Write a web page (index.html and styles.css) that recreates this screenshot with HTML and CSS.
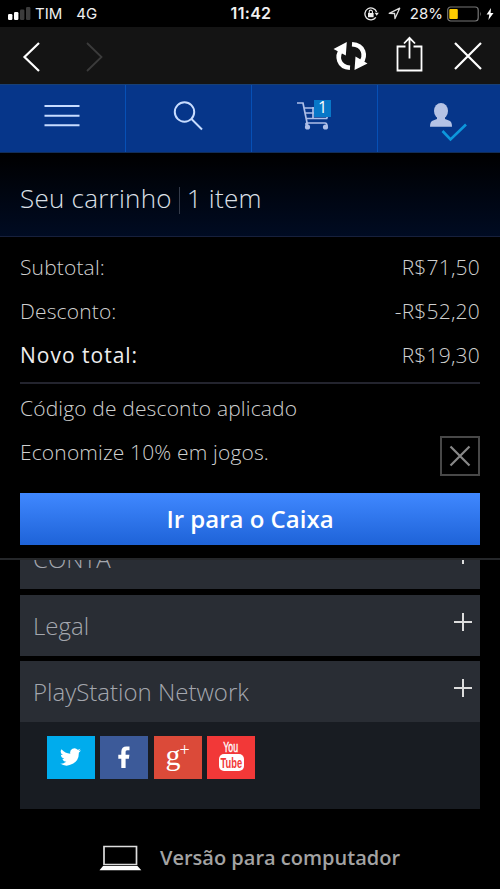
FILE: index.html
```html
<!DOCTYPE html>
<html lang="pt-BR">
<head>
<meta charset="utf-8">
<title>Seu carrinho</title>
<link rel="stylesheet" href="styles.css">
</head>
<body>
<div class="screen">
  <header class="status">
    <div class="status-left">
      <svg class="signal" width="23" height="14" viewBox="0 0 23 14"><rect x="0" y="7" width="4.4" height="6" rx="1.2" fill="#fff"/><rect x="6" y="5" width="4.4" height="8" rx="1.2" fill="#fff"/><rect x="12" y="2.500" width="4.400" height="10.500" rx="1.200" fill="#3c3c3c"/><rect x="18" y="0" width="4.400" height="13" rx="1.200" fill="#3c3c3c"/></svg>
      <span class="carrier">TIM</span><span class="radio">4G</span>
    </div>
    <span class="clock">11:42</span>
    <div class="status-right">
      <svg class="lock" width="15" height="14" viewBox="0 0 15 14"><path d="M11.800 10.400A6 6 0 1 1 12.600 5" fill="none" stroke="#e8e8e8" stroke-width="1.300"/><path d="M10.600 5.800h4.200l-2.100 3z" fill="#e8e8e8"/><rect x="4" y="6" width="5.600" height="4.200" fill="#eee"/><path d="M5.200 6V4.700a1.600 1.600 0 0 1 3.200 0V6" fill="none" stroke="#eee" stroke-width="1.100"/></svg>
      <svg class="location" width="13" height="13" viewBox="0 0 13 13"><path d="M1.200 6.300 11.700 1.200 7 11.600 6.600 6.500z" fill="none" stroke="#ddd" stroke-width="1.300" stroke-linejoin="round"/></svg>
      <span class="percent">28%</span>
      <svg class="battery" width="36" height="16" viewBox="0 0 36 16"><rect x=".7" y="1" width="30.500" height="14" rx="3" fill="none" stroke="#777" stroke-width="1.200"/><rect x="2.300" y="3" width="8.500" height="10" rx="1" fill="#ffcd00"/><path d="M33 5.500q1.600 2.500 0 5z" fill="#777"/></svg>
      <svg class="bolt" width="8" height="14" viewBox="0 0 8 14"><path d="M5 1 .6 7.600h2.700L2.400 13 7.500 5.900H4.600z" fill="#fff"/></svg>
    </div>
  </header>
  <div class="toolbar">
    <svg width="500" height="57" viewBox="0 27 500 57" fill="none" stroke="#fff" stroke-width="2.200">
      <path d="M39 43 24.500 57 39 71"/>
      <path d="M87 43 101.500 57 87 71" stroke="#3b3b3b" stroke-width="1.800"/>
      <g stroke-width="4.600"><path d="M350 67.800C338 67 336.500 56 341.500 49.500"/><path d="M352 44.200C364.500 45 366 56 361 62.500"/></g>
      <path d="M333.500 49 346.800 42 345.800 55.500zM367.500 63.500 354.500 70 355.500 56.500z" fill="#fff" stroke="none"/>
      <path d="M405.500 46.500H397.500V70.500H421.500V46.500H413.500M409.500 58.500V38M404 43.500 409.500 37.800 415 43.500" stroke-width="1.800"/>
      <path d="M455 43 481 69M481 43 455 69"/>
    </svg>
  </div>
  <nav class="nav">
    <a class="tab"><svg width="36" height="24" viewBox="0 0 36 24"><path d="M.5 2h35M.5 11.700h35M.5 21.300h35" stroke="#c7dcff" stroke-width="2"/></svg></a>
    <a class="tab"><svg width="30" height="30" viewBox="0 0 30 30" fill="none" stroke="#c7dcff" stroke-width="2"><circle cx="11.500" cy="11" r="9.700"/><path d="M18.500 18 29 28.500"/></svg></a>
    <a class="tab cart"><svg width="34" height="30" viewBox="0 0 34 30" fill="none" stroke="#aebfe8" stroke-width="1.700"><path d="M0 2h6l4.500 22M7.200 7H17M8.200 12H18M9.200 17.500h20.500l1-3M16 6v11M9.500 24.500q-1.500-2.500 1-2.500H28q2 0 2 3"/><circle cx="10.500" cy="26" r="2.600" fill="#aebfe8" stroke="none"/><circle cx="28.500" cy="26" r="2.600" fill="#aebfe8" stroke="none"/></svg><span class="count">1</span></a>
    <a class="tab user"><svg width="38" height="39" viewBox="0 0 38 39"><ellipse cx="12" cy="8" rx="7" ry="8" fill="#b5c3e5"/><path d="M8 12h8v4l4.500 1.700q2.500 1 2.500 6H1q0-5 2.500-6L8 16z" fill="#b5c3e5"/><path d="m13.500 28 8 8.500L37 21.500" fill="none" stroke="#0d97dc" stroke-width="2.600"/></svg></a>
  </nav>
  <section class="cart-head"><span class="cart-title">Seu carrinho</span><i class="bar"></i><span class="cart-items">1 item</span></section>
  <section class="summary">
    <div class="row"><span class="t-sub">Subtotal:</span><span class="price">R$71,50</span></div>
    <div class="row"><span class="t-desc">Desconto:</span><span class="price">-R$52,20</span></div>
    <div class="row"><span class="t-total">Novo total:</span><span class="price">R$19,30</span></div>
    <hr class="divider">
    <div class="row"><span class="t-code">Código de desconto aplicado</span></div>
    <div class="row"><span class="t-save">Economize 10% em jogos.</span><span class="remove"><svg width="22" height="22" viewBox="0 0 22 22"><path d="m1.500 1.500 19 19M20.500 1.500l-19 19" stroke="#888" stroke-width="2.200"/></svg></span></div>
    <a class="checkout"><span>Ir para o Caixa</span></a>
  </section>
  <section class="links">
    <div class="clip"><div class="item"><span class="t-conta">CONTA</span><i class="plus"></i></div></div>
    <div class="item"><span class="t-legal">Legal</span><i class="plus"></i></div>
    <div class="item"><span class="t-psn">PlayStation Network</span><i class="plus"></i></div>
    <div class="social">
      <a class="tile twitter"><svg width="21" height="18" viewBox="0 0 24 20"><path fill="#fff" d="M24 2.400a10 10 0 0 1-2.800.8A4.900 4.900 0 0 0 23.300.500a10 10 0 0 1-3.100 1.200 4.900 4.900 0 0 0-8.400 4.500A14 14 0 0 1 1.700 1.100a4.900 4.900 0 0 0 1.500 6.600A5 5 0 0 1 1 7.100a4.900 4.900 0 0 0 3.900 4.900 5 5 0 0 1-2.200.1 4.900 4.900 0 0 0 4.600 3.400A10 10 0 0 1 0 17.500 14 14 0 0 0 21.500 5.100 10 10 0 0 0 24 2.400z"/></svg></a>
      <a class="tile facebook"><svg width="12" height="22" viewBox="0 0 12 22"><path fill="#fff" d="M3.300 22V12.700H.3V8.700h3V5.800C3.300 2.300 5.300.6 8.300.6h3.200v3.700H9.300c-1.400 0-1.700.8-1.700 1.900v2.500h3.800l-.5 4H7.600V22z"/></svg></a>
      <a class="tile google"><span class="g">g</span><span class="gplus">+</span></a>
      <a class="tile youtube"><span class="you">You</span><span class="tube"><b>Tube</b></span></a>
    </div>
  </section>
  <footer class="desktop">
    <svg width="43" height="26" viewBox="0 0 43 26"><path d="M5 1.500h32.500v18H5z" fill="none" stroke="#ddd" stroke-width="1.700"/><path d="M4 21h34.500l3.800 4.200H.500z" fill="#fff"/></svg>
    <span class="t-desktop">Versão para computador</span>
  </footer>
</div>
</body>
</html>
```
FILE: styles.css
```css
* { box-sizing: border-box; }
body { margin: 0; background: #000; font-family: "Open Sans", sans-serif; }
svg { display: block; flex: none; }
span { white-space: nowrap; }
.screen { width: 500px; height: 889px; overflow: hidden; background: #000; }
.status { height: 27px; display: grid; grid-template-columns: 1fr auto 1fr; align-items: center; padding: 0 6px 0 8px; color: #f0f0f0; font: 15px/27px Inter, sans-serif; }
.status-left, .status-right { display: flex; align-items: center; }
.status-right { justify-content: flex-end; }
.carrier { margin-left: 4px; }
.radio { margin-left: 14px; }
.clock { font-weight: 600; font-size: 16px; letter-spacing: .3px; }
.location { margin: 0 9px; }
.battery { margin-left: 4px; }
.bolt { margin-left: 3px; }
.toolbar { height: 57px; background: #141414; }
.nav { height: 69px; display: grid; grid-template-columns: 126px 126px 126px 122px; background: #06368a; border-top: 1px solid #184076; border-bottom: 1px solid #112d58; }
.tab { display: flex; align-items: flex-start; justify-content: center; border-right: 1px solid #0750b5; padding: 19px 2px 0 0; }
.tab:nth-child(2) { padding-top: 16px; }
.tab:last-child { border: 0; }
.tab.cart { position: relative; padding-top: 16px; }
.count { position: absolute; left: 62px; top: 15px; width: 17px; height: 17px; background: #0878c8; color: #fff; font: 16px/15px "Open Sans", sans-serif; text-align: center; }
.tab.user { padding: 18px 0 0 32px; }
.user svg { margin-right: 14px; }
.cart-head { height: 84px; display: flex; align-items: center; padding: 6px 20px 0; background: linear-gradient(#000, #000b22); border-bottom: 1px solid #17203c; color: #dce0e8; font-size: 26px; font-weight: 300; letter-spacing: .25px; }
.bar { width: 1px; height: 27px; margin: 5px 7px 0 7px; background: #343b4a; }
.summary { height: 323px; padding: 8px 20px 0; border-bottom: 2px solid #25272a; font-size: 21px; font-weight: 300; color: #d0d0d0; letter-spacing: .15px; }
.row { height: 44px; display: flex; align-items: center; justify-content: space-between; }
.row > span:first-child { margin-top: -1px; }
.price { margin-top: -1px; letter-spacing: .2px; }
.row > .t-total { font-weight: 400; color: #eee; letter-spacing: 1px; }
.divider { height: 2px; margin: 5px 0 3px; border: 0; background: #23242e; }
.t-code, .t-save { position: relative; top: -1px; }
.remove { width: 40px; height: 40px; margin-top: 5px; display: flex; align-items: center; justify-content: center; border: 2px solid #484848; }
.checkout { height: 52px; margin-top: 18px; padding-bottom: 2px; display: flex; align-items: center; justify-content: center; background: linear-gradient(#4088ff, #1e63d8); color: #fff; font-size: 24px; font-weight: 600; letter-spacing: 0; }
.links { padding: 0 20px; }
.clip { height: 29px; margin-bottom: 6px; display: flex; align-items: flex-end; overflow: hidden; }
.item { width: 460px; height: 61px; flex: none; display: flex; align-items: center; justify-content: space-between; padding: 0 8px 0 13px; background: #292d34; color: #a4a7ae; font-size: 24px; font-weight: 300; }
.item + .item { margin-top: 5px; }
.plus { width: 18px; height: 18px; margin-top: -7px; background: linear-gradient(#ddd, #ddd) center / 18px 2px no-repeat, linear-gradient(#ddd, #ddd) center / 2px 18px no-repeat; }
.social { height: 87px; padding: 14px 26.500px; display: flex; gap: 5.500px; background: #181c22; }
.tile { width: 48px; height: 42.500px; display: flex; align-items: center; justify-content: center; color: #fff; }
.twitter { background: #00aced; }
.facebook { background: #3c5a99; }
.google { background: #db4a39; align-items: flex-start; }
.g { font: 30px/38px "Liberation Serif", serif; margin-right: -1px; }
.gplus { font: 18px/29px "Liberation Serif", serif; }
.youtube { background: #f23838; flex-direction: column; }
.you { font: 15px/14px "Liberation Sans", sans-serif; -webkit-text-stroke: .4px #fff; transform: scaleX(.58); }
.tube { width: 25px; height: 17px; margin-bottom: 3px; display: flex; justify-content: center; background: #fff; border-radius: 5px; color: #f23838; font: 15px/17px "Liberation Sans", sans-serif; }
.tube b { transform: scaleX(.62); }
.desktop { height: 80px; display: flex; align-items: center; padding: 18px 0 0 99px; color: #a3a3a3; font-size: 20px; font-weight: 600; }
.desktop span { margin: -2px 0 0 18px; }
```
